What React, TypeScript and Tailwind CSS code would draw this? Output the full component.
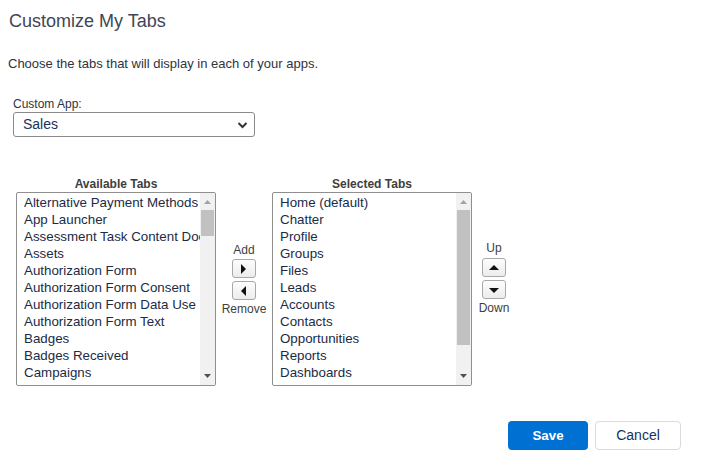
import React from "react";

const available = [
  "Alternative Payment Methods",
  "App Launcher",
  "Assessment Task Content Document",
  "Assets",
  "Authorization Form",
  "Authorization Form Consent",
  "Authorization Form Data Use",
  "Authorization Form Text",
  "Badges",
  "Badges Received",
  "Campaigns",
  "Card Payment Methods",
];

const selected = [
  "Home (default)",
  "Chatter",
  "Profile",
  "Groups",
  "Files",
  "Leads",
  "Accounts",
  "Contacts",
  "Opportunities",
  "Reports",
  "Dashboards",
  "Events",
];

function ListBox({ items, thumbTop, thumbHeight }: { items: string[]; thumbTop: number; thumbHeight: number }) {
  return (
    <div className="relative w-[200px] h-[194px] border border-[#8f8f8f] rounded-[2px] bg-white overflow-hidden flex">
      <div className="flex-1 min-w-0 pt-[1px] pl-[7px] overflow-hidden">
        {items.map((t) => (
          <div key={t} className="h-[17px] leading-[17px] text-[13.33px] text-[#1b2b45] whitespace-nowrap overflow-hidden">
            {t}
          </div>
        ))}
      </div>
      <div className="relative w-[15px] h-full bg-[#f1f1f1] shrink-0">
        <svg className="absolute left-[3px] top-[6px]" width="9" height="6" viewBox="0 0 9 6">
          <polygon points="4.5,1 8,5 1,5" fill="#a3a3a3" />
        </svg>
        <div
          className="absolute left-[1px] right-[1px] bg-[#c1c1c1]"
          style={{ top: thumbTop, height: thumbHeight }}
        />
        <svg className="absolute left-[3px] bottom-[6px]" width="9" height="6" viewBox="0 0 9 6">
          <polygon points="1,1 8,1 4.5,5" fill="#505050" />
        </svg>
      </div>
    </div>
  );
}

function ArrowBtn({ dir }: { dir: "right" | "left" | "up" | "down" }) {
  const pts =
    dir === "right"
      ? "3,1 8,6 3,11"
      : dir === "left"
      ? "8,1 3,6 8,11"
      : dir === "up"
      ? "1,8 6,3 11,8"
      : "1,4 11,4 6,9";
  return (
    <div className="w-[24px] h-[19px] border border-[#a8a8a8] rounded-[3px] bg-gradient-to-b from-[#fdfdfd] to-[#ececec] flex items-center justify-center">
      <svg width="12" height="12" viewBox="0 0 12 12">
        <polygon points={pts} fill="#111" />
      </svg>
    </div>
  );
}

export default function App() {
  return (
    <div
      className="w-[721px] h-[475px] bg-white text-[#3e3e3c] overflow-hidden"
      style={{ fontFamily: '"Liberation Sans", Arial, sans-serif' }}
    >
      <div className="pl-[8px] pt-[10px]">
        <h1 className="text-[18px] leading-[22px] text-[#3e4655] pl-[1px]">Customize My Tabs</h1>
        <p className="mt-[24px] text-[13px] leading-[16px] text-[#2e3440]">
          Choose the tabs that will display in each of your apps.
        </p>
      </div>

      <div className="pl-[13px] mt-[25px]">
        <div className="text-[12px] leading-[14px] text-[#2e3440]">Custom App:</div>
        <div className="mt-[1px] w-[242px] h-[25px] border border-[#8a8a8a] rounded-[3px] flex items-center justify-between pl-[9px] pr-[6px]">
          <span className="text-[14px] text-[#16325c]">Sales</span>
          <svg width="11" height="8" viewBox="0 0 11 8">
            <polyline points="1.5,2 5.5,6 9.5,2" fill="none" stroke="#333" strokeWidth="2" />
          </svg>
        </div>
      </div>

      <div className="flex pl-[16px] mt-[40px]">
        <div className="w-[200px] flex flex-col">
          <div className="text-center text-[12px] leading-[14px] font-bold text-[#3e3e3c]">Available Tabs</div>
          <div className="mt-[1px]">
            <ListBox items={available} thumbTop={17} thumbHeight={26} />
          </div>
        </div>

        <div className="w-[56px] flex flex-col items-center pt-[66px]">
          <div className="text-[12px] leading-[14px] text-[#3e3e3c]">Add</div>
          <div className="mt-[2px] flex flex-col gap-[3px]">
            <ArrowBtn dir="right" />
            <ArrowBtn dir="left" />
          </div>
          <div className="mt-[2px] text-[12px] leading-[14px] text-[#3e3e3c]">Remove</div>
        </div>

        <div className="w-[200px] flex flex-col">
          <div className="text-center text-[12px] leading-[14px] font-bold text-[#3e3e3c]">Selected Tabs</div>
          <div className="mt-[1px]">
            <ListBox items={selected} thumbTop={17} thumbHeight={135} />
          </div>
        </div>

        <div className="pl-[10px] w-[34px] flex flex-col items-center pt-[64px]">
          <div className="text-[12px] leading-[14px] text-[#3e3e3c]">Up</div>
          <div className="mt-[3px] flex flex-col gap-[3px]">
            <ArrowBtn dir="up" />
            <ArrowBtn dir="down" />
          </div>
          <div className="mt-[2px] text-[12px] leading-[14px] text-[#3e3e3c]">Down</div>
        </div>
      </div>

      <div className="flex justify-end gap-[7px] pr-[40px] mt-[35px]">
        <button className="w-[80px] h-[29px] rounded-[4px] bg-[#0070d2] text-white text-[13.33px] font-bold leading-[27px]">
          Save
        </button>
        <button className="w-[86px] h-[29px] rounded-[4px] border border-[#dddbda] bg-white text-[#16325c] text-[14px] leading-[25px]">
          Cancel
        </button>
      </div>
    </div>
  );
}
